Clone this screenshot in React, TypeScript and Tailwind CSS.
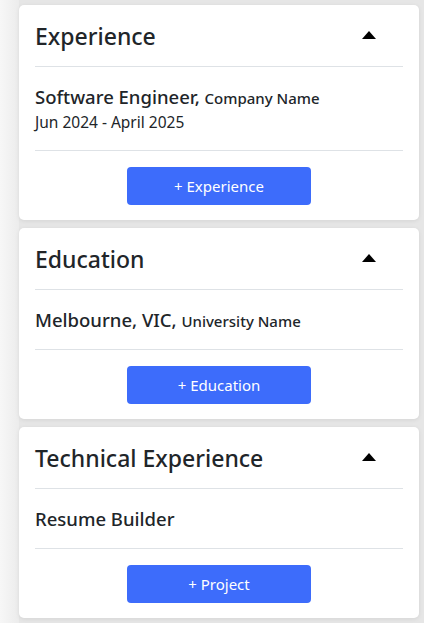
import React from "react";

function Triangle() {
  return (
    <svg width="14" height="8" viewBox="0 0 14 8" className="block">
      <polygon points="7,0 14,8 0,8" fill="#000" />
    </svg>
  );
}

function Card({
  title,
  children,
  button,
}: {
  title: string;
  children: React.ReactNode;
  button: string;
}) {
  return (
    <div className="bg-white rounded-[5px] shadow-[0_1px_4px_rgba(0,0,0,0.08)] px-4 pt-4 pb-[15px]">
      <div className="flex items-start justify-between pb-[15px] border-b border-[#dee2e6]">
        <h2 className="text-[23px] leading-[30px] font-medium text-[#212529]">{title}</h2>
        <div className="mr-[27px] mt-[10px]">
          <Triangle />
        </div>
      </div>
      <div className="py-4 border-b border-[#dee2e6] text-[#212529]">{children}</div>
      <div className="flex justify-center pt-4">
        <button className="w-[184px] h-[38px] rounded-[4px] bg-[#3d6cfb] text-white text-[15px] leading-none">
          {button}
        </button>
      </div>
    </div>
  );
}

export default function App() {
  return (
    <div
      className="flex min-h-[623px] bg-[#e6e6e6]"
      style={{ fontFamily: '"Noto Sans", "Open Sans", sans-serif' }}
    >
      <div className="w-[19px] shrink-0 bg-gradient-to-r from-[#f7f7f7] to-[#ececec]" />
      <div className="w-[400px] flex flex-col gap-2 pt-[5px] pb-[6px]">
        <Card title="Experience" button="+ Experience">
          <div className="h-[27px] text-[18.5px] leading-[27px] font-medium">
            Software Engineer, <span className="text-[15px] leading-none">Company Name</span>
          </div>
          <div className="h-[24px] text-[15.5px] leading-[24px]">Jun 2024 - April 2025</div>
        </Card>
        <Card title="Education" button="+ Education">
          <div className="h-[27px] text-[18.5px] leading-[27px] font-medium">
            Melbourne, VIC, <span className="text-[15px] leading-none">University Name</span>
          </div>
        </Card>
        <Card title="Technical Experience" button="+ Project">
          <div className="h-[27px] text-[18.5px] leading-[27px] font-medium">Resume Builder</div>
        </Card>
      </div>
      <div className="flex-1" />
    </div>
  );
}
